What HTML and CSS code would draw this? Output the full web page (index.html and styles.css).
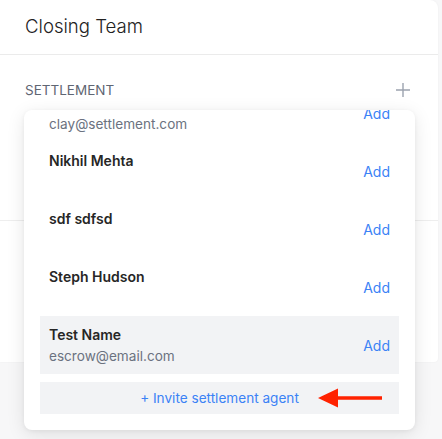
FILE: index.html
```html
<!DOCTYPE html>
<html>
<head>
<meta charset="utf-8">
<link rel="stylesheet" href="styles.css">
</head>
<body>
<div class="card">
  <div class="card-header">Closing Team</div>
  <div class="section">
    <div class="section-head">
      <span class="section-label">SETTLEMENT</span>
      <svg class="plus" width="16" height="16" viewBox="0 0 16 16"><path d="M8 1v14M1 8h14" stroke="#9ca3af" stroke-width="1.4" fill="none"/></svg>
    </div>
  </div>
  <div class="section section-empty"></div>

  <div class="dropdown">
    <div class="list">
      <div class="item">
        <div class="info"><div class="name"></div><div class="email">clay@settlement.com</div></div>
        <span class="add">Add</span>
      </div>
      <div class="item">
        <div class="info"><div class="name">Nikhil Mehta</div><div class="email"></div></div>
        <span class="add">Add</span>
      </div>
      <div class="item">
        <div class="info"><div class="name">sdf sdfsd</div><div class="email"></div></div>
        <span class="add">Add</span>
      </div>
      <div class="item">
        <div class="info"><div class="name">Steph Hudson</div><div class="email"></div></div>
        <span class="add">Add</span>
      </div>
      <div class="item item-active">
        <div class="info"><div class="name">Test Name</div><div class="email">escrow@email.com</div></div>
        <span class="add">Add</span>
      </div>
      <div class="invite">+ Invite settlement agent</div>
    </div>
    <svg class="arrow" width="66" height="22" viewBox="0 0 66 22"><polygon points="0,11 20,1.5 20,9.3 64,9.3 64,12.7 20,12.7 20,20.5" fill="#ff2200"/></svg>
  </div>
</div>
</body>
</html>
```
FILE: styles.css
```css
* { box-sizing: border-box; }
html, body { margin: 0; padding: 0; }
body {
  background: #f7f7f8;
  font-family: Inter, "Noto Sans", sans-serif;
  width: 442px;
  height: 439px;
  overflow: hidden;
}
.card {
  position: relative;
  width: 438px;
  height: 362px;
  background: #fff;
  border-radius: 0 8px 4px 0;
  box-shadow: 0 0 2px rgba(0,0,0,0.05);
}
.card-header {
  height: 55px;
  padding: 14px 24px 0 25px;
  font-size: 18.6px;
  font-weight: 300;
  color: #222;
  line-height: 24px;
  border-bottom: 1px solid #ebebeb;
}
.section {
  height: 166px;
  padding: 25px 24px 0 24px;
  border-bottom: 1px solid #eeeeee;
}
.section-empty { border-bottom: none; height: auto; }
.section-head {
  display: flex;
  justify-content: space-between;
  align-items: center;
  height: 20px;
}
.section-label {
  font-size: 13.5px;
  letter-spacing: 0;
  color: #5f6673;
  padding-left: 1px;
}
.plus { margin-right: 3px; }
.dropdown {
  position: absolute;
  left: 24px;
  top: 110px;
  width: 391px;
  height: 320px;
  background: #fff;
  border-radius: 8px;
  box-shadow: 0 4px 18px rgba(0,0,0,0.10), 0 1px 4px rgba(0,0,0,0.05);
  overflow: hidden;
  display: flex;
  flex-direction: column;
  justify-content: flex-end;
  padding: 0 16px 16px;
}
.list { display: flex; flex-direction: column; }
.item {
  flex: none;
  display: flex;
  justify-content: space-between;
  align-items: center;
  height: 58px;
  padding: 8px 9px;
}
.item-active { background: #f2f3f5; }
.name {
  font-size: 14px;
  font-weight: 600;
  color: #262626;
  line-height: 22px;
  height: 22px;
}
.email {
  font-size: 13.6px;
  color: #6b7280;
  line-height: 20px;
  height: 20px;
}
.add {
  font-size: 14px;
  color: #3b82f6;
}
.invite {
  flex: none;
  margin-top: 8px;
  height: 32px;
  line-height: 32px;
  background: #f2f3f5;
  text-align: center;
  font-size: 13.6px;
  color: #3b82f6;
}
.arrow {
  position: absolute;
  left: 294px;
  top: 277px;
}
```
